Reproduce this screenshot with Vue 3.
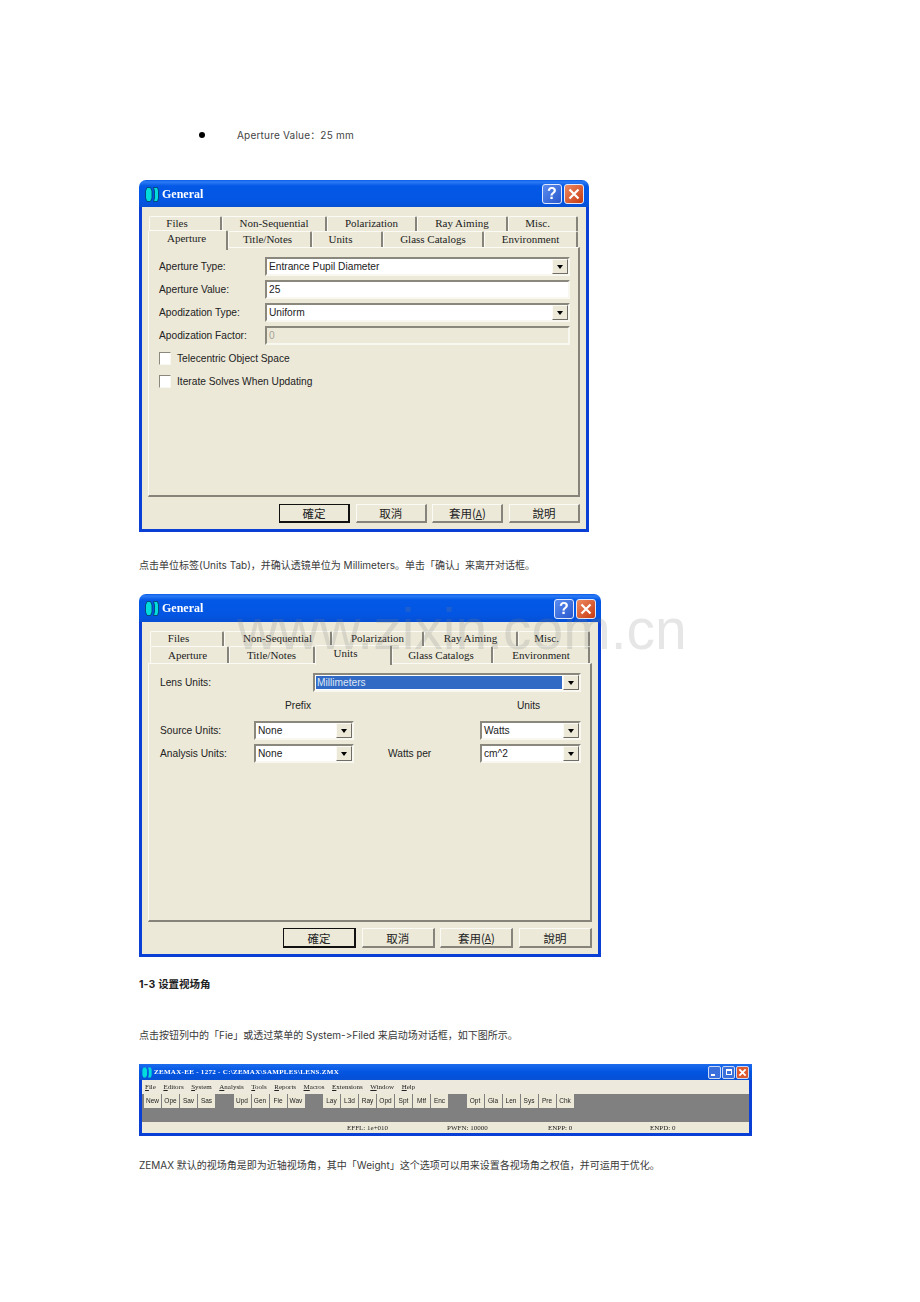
<template>
  <div class="page">
    <div class="bullet-line">
      <i class="dot"></i>
      <span>Aperture Value：25 mm</span>
    </div>

    <template v-for="d in dialogs" :key="d.id">
      <div :class="['win', d.id]">
        <div class="title">
          <svg class="logo" viewBox="0 0 14 15" width="14" height="15">
            <path d="M2 .5h3.500l1.500 3.500v7l-1.500 3.500h-3.500l-1.500-3.500v-7z" fill="#00dcdc" stroke="#04386a" stroke-width=".8" />
            <path d="M8.500 .5h4l1 3.500v7l-1 3.500h-4l1-3.500v-7z" fill="#00dcdc" stroke="#04386a" stroke-width=".8" />
          </svg>
          <span class="title-text">General</span>
          <span class="cap cap-help">?</span>
          <span class="cap cap-close">
            <svg viewBox="0 0 12 12" width="12" height="12"><path d="M1.500 1.500l9 9M10.500 1.500l-9 9" stroke="#fff" stroke-width="2.200" /></svg>
          </span>
        </div>
        <div class="body">
          <div v-for="(row, r) in d.tabs" :key="r" class="tab-row" :style="{ marginLeft: row.start + 'px' }">
            <div
              v-for="t in row.items"
              :key="t.n"
              :class="['tab', { on: t.n === d.active }]"
              :style="{ width: t.w + 'px', paddingRight: (t.pad || 0) + 'px' }"
            >{{ t.n }}</div>
          </div>

          <div class="panel">
            <template v-if="d.id === 'win-a'">
              <div class="form">
                <template v-for="f in apertureFields" :key="f.label">
                  <label>{{ f.label }}</label>
                  <div :class="['field', { off: f.off }]">
                    <span class="val">{{ f.value }}</span>
                    <span v-if="f.drop" class="drop"><i></i></span>
                  </div>
                </template>
              </div>
              <div v-for="c in checks" :key="c" class="check"><i></i>{{ c }}</div>
            </template>

            <template v-else>
              <div class="lens-row">
                <label>Lens Units:</label>
                <div class="field">
                  <span class="val sel">Millimeters</span>
                  <span class="drop"><i></i></span>
                </div>
              </div>
              <div class="units">
                <span></span><span class="head prefix">Prefix</span><span></span><span class="head">Units</span>
                <label>Source Units:</label>
                <div class="field"><span class="val">None</span><span class="drop"><i></i></span></div>
                <span></span>
                <div class="field"><span class="val">Watts</span><span class="drop"><i></i></span></div>
                <label>Analysis Units:</label>
                <div class="field"><span class="val">None</span><span class="drop"><i></i></span></div>
                <label class="per">Watts per</label>
                <div class="field"><span class="val">cm^2</span><span class="drop"><i></i></span></div>
              </div>
            </template>
          </div>

          <div class="footer">
            <div class="btn default">確定</div>
            <div class="btn">取消</div>
            <div class="btn">套用(<u>A</u>)</div>
            <div class="btn">說明</div>
          </div>
        </div>
      </div>
      <p v-if="d.id === 'win-a'" class="line caption">点击单位标签(Units Tab)，并确认透镜单位为 Millimeters。单击「确认」来离开对话框。</p>
    </template>

    <div class="watermark">www.zixin.com.cn</div>

    <p class="head-line"><b>1-3</b> <b>设置视场角</b></p>
    <p class="line mid">点击按钮列中的「Fie」或透过菜单的 System->Filed 来启动场对话框，如下图所示。</p>

    <div class="zemax">
      <div class="z-title">
        <svg viewBox="0 0 14 15" width="10" height="11">
          <path d="M2 .5h3.500l1.500 3.500v7l-1.500 3.500h-3.500l-1.500-3.500v-7z" fill="#00dcdc" />
          <path d="M8.500 .5h4l1 3.500v7l-1 3.500h-4l1-3.500v-7z" fill="#00dcdc" />
        </svg>
        <span class="z-name">ZEMAX-EE - 1272 - C:\ZEMAX\SAMPLES\LENS.ZMX</span>
        <span class="z-cap"><i class="min"></i></span>
        <span class="z-cap"><i class="max"></i></span>
        <span class="z-cap z-close">
          <svg viewBox="0 0 10 10" width="9" height="9"><path d="M1.500 1.500l7 7M8.500 1.500l-7 7" stroke="#fff" stroke-width="2" /></svg>
        </span>
      </div>
      <div class="z-menu">
        <span v-for="m in menu" :key="m"><u>{{ m[0] }}</u>{{ m.slice(1) }}</span>
      </div>
      <div class="z-mdi">
        <div v-for="(g, i) in toolbar" :key="i" class="z-group">
          <span v-for="b in g" :key="b" class="z-btn">{{ b }}</span>
        </div>
      </div>
      <div class="z-status">
        <span></span>
        <span>EFFL: 1e+010</span>
        <span>PWFN: 10000</span>
        <span>ENPP: 0</span>
        <span>ENPD: 0</span>
      </div>
    </div>

    <p class="line last">ZEMAX 默认的视场角是即为近轴视场角，其中「Weight」这个选项可以用来设置各视场角之权值，并可运用于优化。</p>
  </div>
</template>

<script setup>
// pad: the captions on these tabs do not sit in the middle of the tab
const dialogs = [
  {
    id: 'win-a',
    active: 'Aperture',
    tabs: [
      {
        start: 1,
        items: [
          { n: 'Files', w: 73, pad: 16 },
          { n: 'Non-Sequential', w: 105 },
          { n: 'Polarization', w: 90 },
          { n: 'Ray Aiming', w: 91 },
          { n: 'Misc.', w: 70, pad: 10 },
        ],
      },
      {
        start: 0,
        items: [
          { n: 'Aperture', w: 80, pad: 2 },
          { n: 'Title/Notes', w: 84, pad: 4 },
          { n: 'Units', w: 71, pad: 13 },
          { n: 'Glass Catalogs', w: 101 },
          { n: 'Environment', w: 94 },
        ],
      },
    ],
  },
  {
    id: 'win-b',
    active: 'Units',
    tabs: [
      {
        start: 2,
        items: [
          { n: 'Files', w: 74, pad: 16 },
          { n: 'Non-Sequential', w: 108 },
          { n: 'Polarization', w: 92 },
          { n: 'Ray Aiming', w: 94 },
          { n: 'Misc.', w: 72, pad: 14 },
        ],
      },
      {
        start: 2,
        items: [
          { n: 'Aperture', w: 79, pad: 3 },
          { n: 'Title/Notes', w: 86 },
          { n: 'Units', w: 77, pad: 15 },
          { n: 'Glass Catalogs', w: 101, pad: 2 },
          { n: 'Environment', w: 97 },
        ],
      },
    ],
  },
]

const apertureFields = [
  { label: 'Aperture Type:', value: 'Entrance Pupil Diameter', drop: true },
  { label: 'Aperture Value:', value: '25' },
  { label: 'Apodization Type:', value: 'Uniform', drop: true },
  { label: 'Apodization Factor:', value: '0', off: true },
]

const checks = ['Telecentric Object Space', 'Iterate Solves When Updating']

const menu = ['File', 'Editors', 'System', 'Analysis', 'Tools', 'Reports', 'Macros', 'Extensions', 'Window', 'Help']

const toolbar = [
  ['New', 'Ope', 'Sav', 'Sas'],
  ['Upd', 'Gen', 'Fie', 'Wav'],
  ['Lay', 'L3d', 'Ray', 'Opd', 'Spt', 'Mtf', 'Enc'],
  ['Opt', 'Gla', 'Len', 'Sys', 'Pre', 'Chk'],
]
</script>

<style>
html, body {
  background: #fff;
}
</style>

<style scoped>
.page {
  position: relative;
  height: 1302px;
  box-sizing: border-box;
  padding: 125px 0 0 139px;
  overflow: hidden;
  font-family: "Inter", "Noto Sans CJK SC", sans-serif;
  font-size: 10px;
  font-feature-settings: "calt" 0;
  color: #3a3a3a;
}
.bullet-line {
  display: flex;
  align-items: center;
  height: 20px;
  margin-left: 60px;
  gap: 32px;
  letter-spacing: .2px;
  color: #444;
}
.bullet-line span {
  padding-bottom: 2px;
}
.dot {
  width: 6px;
  height: 6px;
  border-radius: 50%;
  background: #000;
}
.win {
  display: flex;
  flex-direction: column;
  box-sizing: border-box;
  border-radius: 7px 7px 0 0;
  overflow: hidden;
  filter: blur(.3px);
  font-family: "Liberation Sans", sans-serif;
  font-size: 10.200px;
  color: #222;
}
.win-a {
  width: 450px;
  height: 352px;
  margin-top: 35px;
}
.win-b {
  width: 462px;
  height: 363px;
  margin-top: 19px;
  margin-bottom: 18px;
}
.title {
  display: flex;
  align-items: center;
  height: 27px;
  flex: none;
  box-sizing: border-box;
  padding: 1px 5px 0 6px;
  background: linear-gradient(#0a5be8 0, #2b7bf5 2px, #0458e6 6px, #0356e4 20px, #0650d4 100%);
}
.win-b .title {
  height: 28px;
}
.logo {
  flex: none;
}
.title-text {
  margin-left: 3px;
  flex: 1;
  font: bold 12px "Liberation Serif", serif;
  color: #fff;
}
.cap {
  display: flex;
  align-items: center;
  justify-content: center;
  box-sizing: border-box;
  width: 20px;
  height: 20px;
  border: 1px solid #dfe9fb;
  border-radius: 3px;
  color: #fff;
  font: bold 16px "Liberation Sans", sans-serif;
}
.cap-help {
  background: linear-gradient(135deg, #5a8cf0, #2a58cc);
}
.cap-close {
  margin-left: 2px;
  background: linear-gradient(135deg, #ee8a62, #c73a10);
}
.body {
  flex: 1;
  display: flex;
  flex-direction: column;
  box-sizing: border-box;
  padding: 9px 6px 6px;
  border: solid #0a3fd6;
  border-width: 0 3px 3px;
  background: #ece9d8;
}
.tab-row {
  display: flex;
  height: 15px;
}
.tab-row + .tab-row {
  height: 16px;
}
.win-b .tab-row + .tab-row {
  height: 17px;
}
.tab {
  position: relative;
  box-sizing: border-box;
  text-align: center;
  font: 11px/13px "Liberation Serif", serif;
  border-top: 1px solid #fbfaf4;
  border-left: 1px solid #fbfaf4;
  border-right: 2px solid #85837a;
  border-radius: 2px 2px 0 0;
  background: #ece9d8;
}
.tab-row + .tab-row .tab {
  line-height: 15px;
}
.win-b .tab-row + .tab-row .tab {
  line-height: 16px;
}
.tab-row + .tab-row .tab.on {
  z-index: 1;
  margin-top: -1px;
  height: 20px;
  line-height: 14px;
}
.panel {
  flex: 1;
  box-sizing: border-box;
  padding: 9px 9px 0 10px;
  border: 1px solid;
  border-color: #fbfaf4 #85837a #85837a #fbfaf4;
  border-width: 1px 2px 2px 1px;
}
.win-b .panel {
  padding-left: 11px;
}
.form {
  display: grid;
  grid-template-columns: 106px 305px;
  grid-auto-rows: 19px;
  row-gap: 4px;
  align-items: center;
}
.field {
  display: flex;
  align-items: center;
  box-sizing: border-box;
  height: 19px;
  padding: 1px;
  border: 2px solid;
  border-color: #8a887d #f8f7f0 #f8f7f0 #8a887d;
  background: #fff;
}
.field.off {
  background: #ece9d8;
  color: #a5a297;
}
.val {
  flex: 1;
  padding-left: 1px;
}
.drop {
  display: flex;
  align-items: center;
  justify-content: center;
  box-sizing: border-box;
  flex: none;
  width: 16px;
  height: 15px;
  margin-right: -1px;
  border: 1px solid;
  border-color: #fbfaf4 #6f6d65 #6f6d65 #fbfaf4;
  background: #ece9d8;
}
.drop i {
  border: 3.500px solid transparent;
  border-top: 4px solid #000;
  border-bottom: 0;
}
.check {
  display: flex;
  align-items: center;
  height: 13px;
  margin-top: 10px;
  gap: 6px;
}
.form + .check {
  margin-top: 7px;
}
.check i {
  box-sizing: border-box;
  width: 12px;
  height: 13px;
  border: 1px solid;
  border-color: #8a887d #f8f7f0 #f8f7f0 #8a887d;
  background: #fff;
}
.footer {
  display: flex;
  justify-content: flex-end;
  gap: 5.670px;
  margin-top: 7px;
}
.btn {
  display: flex;
  align-items: center;
  justify-content: center;
  box-sizing: border-box;
  width: 71px;
  height: 19px;
  border: 1px solid;
  border-color: #fbfaf4 #85837a #85837a #fbfaf4;
  border-width: 1px 2px 2px 1px;
  font: 11.500px "Noto Sans CJK TC", sans-serif;
}
.btn u {
  font-size: 10px;
}
.btn.default {
  border: 1px solid #111;
  border-width: 1px 2px 2px 1px;
}
.win-b .footer {
  margin-top: 6px;
}
.win-b .btn {
  width: 73px;
  height: 20px;
}
.lens-row {
  display: grid;
  grid-template-columns: 153px 268px;
  align-items: center;
}
.sel {
  height: 13px;
  line-height: 13px;
  background: #316ac5;
  color: #dde6f5;
  margin-right: 1px;
}
.units {
  display: grid;
  grid-template-columns: 94px 100px 126px 101px;
  grid-template-rows: 18px 19px 19px;
  row-gap: 4px;
  align-items: center;
  margin-top: 7px;
}
.head {
  align-self: start;
  line-height: 14px;
  text-align: center;
  padding-right: 4px;
}
.prefix {
  padding-right: 12px;
}
.per {
  padding-left: 34px;
}
.watermark {
  position: absolute;
  top: 596px;
  left: 237px;
  font: 57px "Liberation Sans", sans-serif;
  color: rgba(130, 130, 130, .2);
  pointer-events: none;
}
.line,
.head-line {
  height: 20px;
  line-height: 20px;
  margin: 0;
}
.caption {
  margin-top: 23px;
}
.head-line {
  font-size: 10.500px;
  color: #222;
}
.mid {
  margin-top: 30px;
}
.last {
  margin-top: 19px;
}
.zemax {
  display: flex;
  flex-direction: column;
  box-sizing: border-box;
  width: 613px;
  height: 72px;
  margin-top: 19px;
  border: solid #0a3fd6;
  border-width: 0 3px 3px;
  border-radius: 3px 3px 0 0;
  filter: blur(.5px);
  font-family: "Liberation Serif", serif;
  font-size: 7px;
  color: #222;
}
.z-title {
  display: flex;
  align-items: center;
  height: 16px;
  margin: 0 -3px;
  padding: 0 3px;
  background: linear-gradient(#1d6cee, #0355e2 50%, #0650d4);
  color: #fff;
}
.z-name {
  flex: 1;
  margin-left: 2px;
  font-weight: bold;
  font-size: 7px;
  letter-spacing: .3px;
}
.z-cap {
  display: flex;
  align-items: center;
  justify-content: center;
  box-sizing: border-box;
  width: 13px;
  height: 13px;
  margin-left: 1px;
  border: 1px solid #cbd9f5;
  border-radius: 2px;
  background: #3a6fdc;
}
.z-close {
  background: #dd5a30;
}
.z-cap .min {
  width: 4px;
  height: 2px;
  margin: 6px 4px 0 0;
  background: #fff;
}
.z-cap .max {
  width: 6px;
  height: 6px;
  border: 1px solid #fff;
  border-top-width: 2px;
  box-sizing: border-box;
}
.z-menu {
  display: flex;
  align-items: center;
  height: 14px;
  padding-left: 3px;
  gap: 7.500px;
  background: #ede9dc;
}
.z-mdi {
  display: flex;
  align-items: flex-start;
  flex: 1;
  padding-left: 2px;
  gap: 18.500px;
  background: #808080;
}
.z-group {
  display: flex;
  gap: 1px;
}
.z-btn {
  width: 17px;
  height: 14px;
  line-height: 13px;
  text-align: center;
  background: #ece9d8;
  font-family: "Liberation Sans", sans-serif;
  font-size: 6.500px;
}
.z-status {
  display: grid;
  grid-template-columns: 205px 100px 101px 102px 1fr;
  align-items: center;
  height: 11px;
  background: #ece9d8;
}
</style>
